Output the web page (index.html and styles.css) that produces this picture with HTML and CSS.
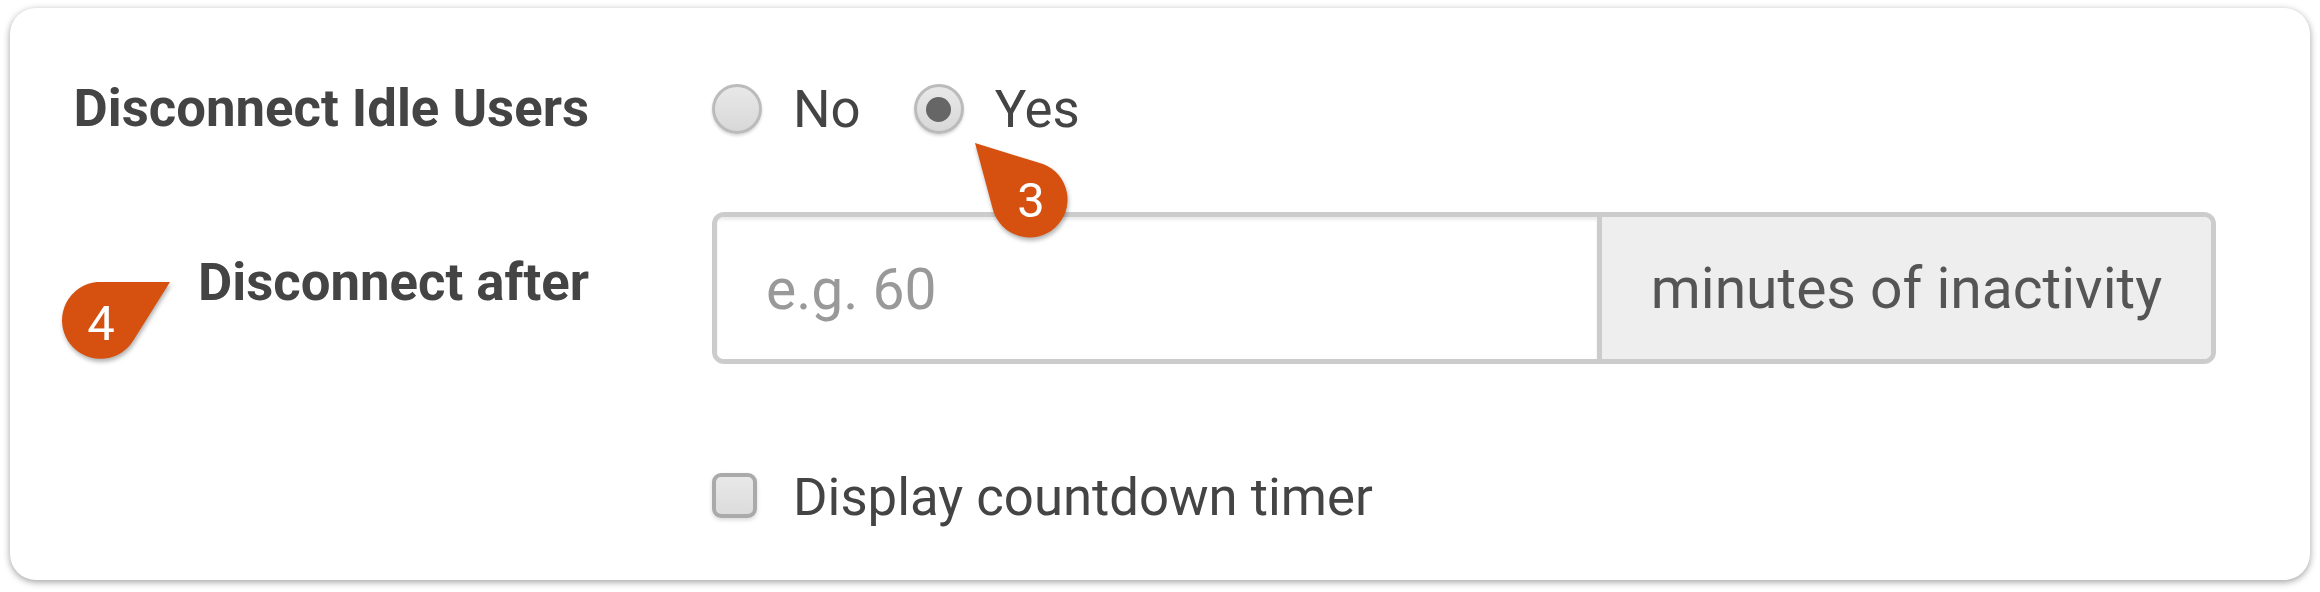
FILE: index.html
```html
<!DOCTYPE html>
<html lang="en">
<head>
<meta charset="utf-8">
<title>Disconnect Idle Users</title>
<link rel="stylesheet" href="styles.css">
</head>
<body>
<main class="card">
  <div class="row row-radio">
    <div class="label">Disconnect Idle Users</div>
    <div class="field radios">
      <label class="option"><span class="radio"></span>No</label>
      <label class="option"><span class="radio radio-on"></span>Yes</label>
    </div>
  </div>
  <div class="row row-input">
    <div class="label">Disconnect after</div>
    <div class="field group">
      <div class="input">e.g. 60</div>
      <div class="addon">minutes of inactivity</div>
    </div>
  </div>
  <div class="row row-check">
    <div class="label"></div>
    <div class="field">
      <label class="option option-check"><span class="checkbox"></span>Display countdown timer</label>
    </div>
  </div>
  <div class="callout callout-3">
    <svg class="drop" viewBox="0 0 100 100" width="100" height="100"><path d="M2 2 L70 23 A38 38 0 1 1 20 69 Z" fill="#d6510f"/></svg>
    <span class="num num-3">3</span>
  </div>
  <div class="callout callout-4">
    <svg class="drop" viewBox="0 0 116 84" width="116" height="84"><path d="M113 3 L40 3 A38.500 38.500 0 1 0 76 62 Z" fill="#d6510f"/></svg>
    <span class="num num-4">4</span>
  </div>
</main>
</body>
</html>
```
FILE: styles.css
```css
* { box-sizing: border-box; }
html, body { margin: 0; background: #fff; }
body { padding: 8px 10px 12px; font-family: Roboto, "Liberation Sans", sans-serif; color: #444; }
.card {
  position: relative;
  width: 2300px;
  height: 572px;
  border-radius: 26px;
  background: #fff;
  box-shadow: 0 2px 7px rgba(0,0,0,.38);
  padding-top: 70px;
}
.row { display: flex; }
.label {
  width: 579px;
  flex: none;
  text-align: right;
  font-size: 52.7px;
  font-weight: 700;
  line-height: 66px;
  color: #444;
  position: relative;
  top: -3px;
}
.field { margin-left: 123px; flex: none; font-size: 52.7px; line-height: 66px; }
.radios { position: relative; top: -2px; gap: 53px; display: flex; }
.row-input { margin-top: 68px; }
.row-input .label { margin-top: 40px; }
.row-check { margin-top: 100px; }
.option { display: flex; align-items: center; gap: 31px; color: #444; }
.option-check { gap: 36px; }
.radio {
  width: 50px; height: 50px; border-radius: 50%;
  border: 3px solid #bbb;
  background: linear-gradient(#e8e8e8, #d8d8d8);
  box-shadow: 0 2px 3px rgba(0,0,0,.15);
  display: flex; align-items: center; justify-content: center;
}
.radio-on::after { content: ""; width: 25px; height: 25px; border-radius: 50%; background: #666; }
.checkbox {
  width: 45px; height: 45px; border-radius: 9px;
  border: 4px solid #aaa;
  background: linear-gradient(#e8e8e8, #dcdcdc);
  box-shadow: 0 2px 4px rgba(0,0,0,.15);
  position: relative;
  top: -2px;
}
.group {
  display: flex;
  width: 1504px;
  height: 152px;
  border: 5px solid #ccc;
  border-radius: 12px;
  overflow: hidden;
  font-size: 57px;
}
.input {
  width: 880px;
  padding: 4px 0 0 49px;
  display: flex; align-items: center;
  color: #999;
  background: #fff;
  box-shadow: inset 0 3px 3px rgba(0,0,0,.08);
}
.addon {
  flex: 1;
  display: flex; align-items: center; justify-content: center;
  padding-top: 2px;
  background: #eee;
  border-left: 5px solid #ccc;
  color: #555;
}
.callout { position: absolute; }
.drop { display: block; overflow: visible; filter: drop-shadow(1px 3px 2px rgba(0,0,0,.3)); }
.callout-3 { left: 963px; top: 133px; width: 100px; height: 100px; }
.callout-4 { left: 47px; top: 271px; width: 116px; height: 84px; }
.num { position: absolute; color: #fff; font-size: 49px; line-height: 49px; width: 76px; text-align: center; }
.num-3 { left: 20px; top: 35px; }
.num-4 { left: 6px; top: 20px; }
```
